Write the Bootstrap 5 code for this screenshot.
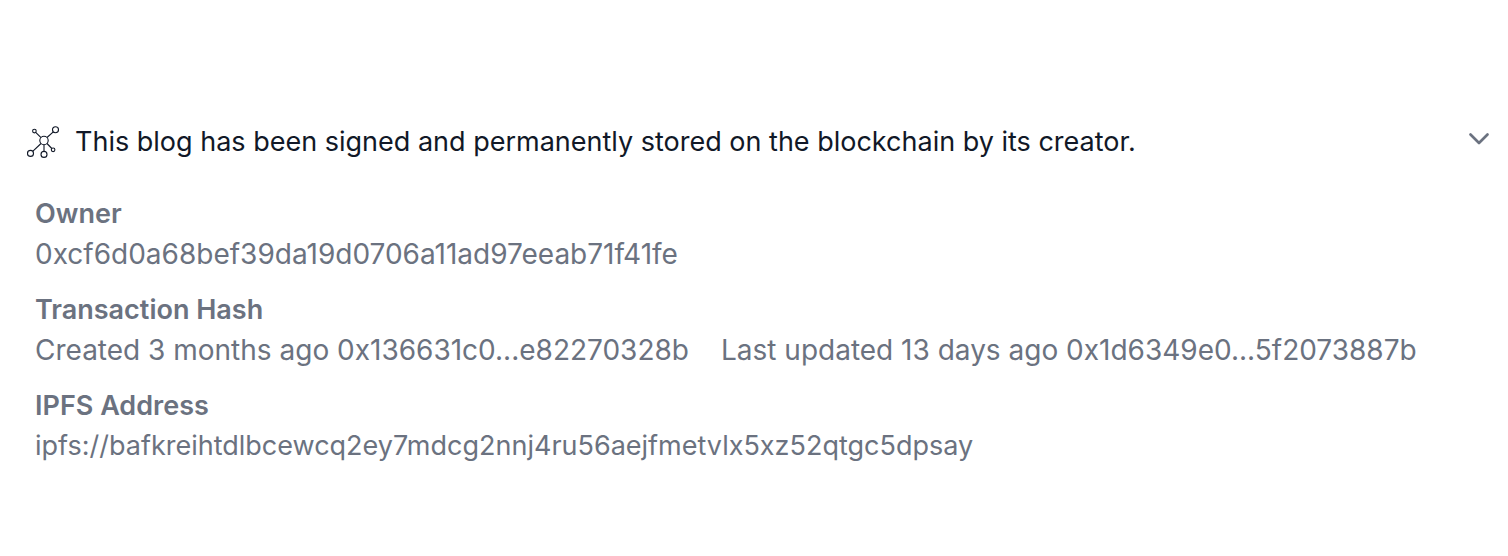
<!DOCTYPE html>
<html lang="en">
<head>
<meta charset="utf-8">
<meta name="viewport" content="width=device-width, initial-scale=1">
<title>Blog signature</title>
<link href="https://cdn.jsdelivr.net/npm/bootstrap@5.3.0/dist/css/bootstrap.min.css" rel="stylesheet">
<style>
  body { font-family: Inter, sans-serif; font-size: 28px; line-height: 40px; color: #6b7280; background: #fff; }
  .signature { padding: 122px 16px 64px 27px; }
  .signature-toggle { color: #111827; }
  .signature-toggle, .ipfs-address { font-size: 27px; }
  .signature-details { padding: 32px 0 0 8px; }
  .signature-details dt { font-size: 27px; font-weight: 600; }
  .signature-details dd { overflow-wrap: anywhere; }
  .hashes { column-gap: 32px; }
</style>
</head>
<body>
<main class="signature">
  <button type="button" class="signature-toggle d-flex align-items-center gap-3 w-100 p-0 border-0 bg-transparent text-start" data-bs-toggle="collapse" data-bs-target="#details" aria-expanded="true" aria-controls="details">
    <svg class="flex-shrink-0" width="32" height="32" viewBox="0 0 32 32" fill="none" stroke="#111827" stroke-width="1.1" aria-hidden="true">
      <circle cx="17" cy="14.5" r="4.2"/>
      <circle cx="28.5" cy="3.7" r="3"/>
      <circle cx="7.4" cy="5.1" r="1.8"/>
      <circle cx="3.5" cy="27.4" r="3"/>
      <circle cx="17" cy="28.4" r="3"/>
      <circle cx="26.1" cy="23.8" r="1.8"/>
      <path d="M20 11.5 26.3 5.8M8.7 6.4 14 11.6M14 17.5 5.7 25.3M17 18.7v6.7M20 17.5l4.8 5"/>
    </svg>
    <span class="flex-grow-1">This blog has been signed and permanently stored on the blockchain by its creator.</span>
    <svg class="flex-shrink-0 mb-2" width="26" height="26" viewBox="0 0 26 26" fill="none" stroke="#6b7280" stroke-width="2.7" stroke-linecap="round" stroke-linejoin="round" aria-hidden="true">
      <path d="m4.5 9.5 8.5 8.5 8.5-8.5"/>
    </svg>
  </button>
  <div class="collapse show" id="details">
    <dl class="signature-details d-flex flex-column gap-3 mb-0">
      <div>
        <dt>Owner</dt>
        <dd class="mb-0">0xcf6d0a68bef39da19d0706a11ad97eeab71f41fe</dd>
      </div>
      <div>
        <dt>Transaction Hash</dt>
        <dd class="hashes d-flex flex-wrap mb-0">
          <span>Created 3 months ago 0x136631c0...e82270328b</span>
          <span>Last updated 13 days ago 0x1d6349e0...5f2073887b</span>
        </dd>
      </div>
      <div>
        <dt>IPFS Address</dt>
        <dd class="ipfs-address mb-0">ipfs://bafkreihtdlbcewcq2ey7mdcg2nnj4ru56aejfmetvlx5xz52qtgc5dpsay</dd>
      </div>
    </dl>
  </div>
</main>
<script src="https://cdn.jsdelivr.net/npm/bootstrap@5.3.0/dist/js/bootstrap.bundle.min.js"></script>
</body>
</html>
